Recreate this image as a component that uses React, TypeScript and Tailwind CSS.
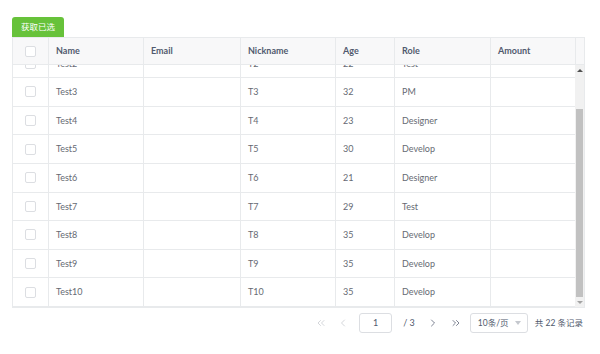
import { useLayoutEffect, useRef, useState } from "react";
import { ChevronLeft, ChevronRight, ChevronsLeft, ChevronsRight } from "lucide-react";

const rows = [
  { name: "Test1", nickname: "T1", age: 18, role: "Develop" },
  { name: "Test2", nickname: "T2", age: 22, role: "Test" },
  { name: "Test3", nickname: "T3", age: 32, role: "PM" },
  { name: "Test4", nickname: "T4", age: 23, role: "Designer" },
  { name: "Test5", nickname: "T5", age: 30, role: "Develop" },
  { name: "Test6", nickname: "T6", age: 21, role: "Designer" },
  { name: "Test7", nickname: "T7", age: 29, role: "Test" },
  { name: "Test8", nickname: "T8", age: 35, role: "Develop" },
  { name: "Test9", nickname: "T9", age: 35, role: "Develop" },
  { name: "Test10", nickname: "T10", age: 35, role: "Develop" },
];

function Checkbox() {
  return <span className="block h-[11px] w-[11px] rounded-[2px] border border-[#dcdee2] bg-white" />;
}

function HeadCell({ w, children }: { w: string; children?: React.ReactNode }) {
  return (
    <div className={`${w} flex h-full shrink-0 items-center border-r border-[#e8eaec] px-[7px] font-bold text-[#515a6e]`}>
      {children}
    </div>
  );
}

function Cell({ w, children }: { w: string; children?: React.ReactNode }) {
  return (
    <div className={`${w} flex h-full shrink-0 items-center border-r border-[#e8eaec] px-[7px] text-[#666a73]`}>
      {children}
    </div>
  );
}

export default function App() {
  const bodyRef = useRef<HTMLDivElement>(null);
  const [scroll, setScroll] = useState({ top: 0, total: 1, view: 1 });

  useLayoutEffect(() => {
    const el = bodyRef.current;
    if (!el) return;
    el.scrollTop = el.scrollHeight - el.clientHeight;
    setScroll({ top: el.scrollTop, total: el.scrollHeight, view: el.clientHeight });
  }, []);

  // track height minus the two arrow buttons
  const trackLen = scroll.view - 20;
  const thumbTop = 10 + (scroll.top / scroll.total) * trackLen;
  const thumbHeight = (scroll.view / scroll.total) * trackLen;

  return (
    <div
      className="min-h-screen bg-white px-[12px] pt-[17px] text-[9px]"
      style={{ fontFamily: 'Lato, "Noto Sans CJK SC", sans-serif' }}
    >
      <button
        type="button"
        className="flex h-[20px] w-[52px] items-center justify-center rounded-t-[3px] bg-[#67c23a] text-[8.5px] text-white"
      >
        获取已选
      </button>

      <div className="w-[573px] border-b border-l border-[#e8eaec]">
        {/* header */}
        <div className="flex h-[28px] border-b border-t border-[#e8eaec] bg-[#f8f8f9]">
          <HeadCell w="w-[36px] justify-center">
            <Checkbox />
          </HeadCell>
          <HeadCell w="w-[95px]">Name</HeadCell>
          <HeadCell w="w-[97px]">Email</HeadCell>
          <HeadCell w="w-[95px]">Nickname</HeadCell>
          <HeadCell w="w-[59px]">Age</HeadCell>
          <HeadCell w="w-[96px]">Role</HeadCell>
          <HeadCell w="w-[85px]">Amount</HeadCell>
          <div className="w-[10px] border-r border-[#e8eaec]" />
        </div>

        {/* body */}
        <div className="flex h-[242px]">
          <div ref={bodyRef} className="w-[563px] overflow-hidden">
            {rows.map((r) => (
              <div key={r.name} className="flex h-[28.6px] border-b border-[#e8eaec] bg-white">
                <Cell w="w-[36px] justify-center">
                  <Checkbox />
                </Cell>
                <Cell w="w-[95px]">{r.name}</Cell>
                <Cell w="w-[97px]" />
                <Cell w="w-[95px]">{r.nickname}</Cell>
                <Cell w="w-[59px]">{r.age}</Cell>
                <Cell w="w-[96px]">{r.role}</Cell>
                <Cell w="w-[85px]" />
              </div>
            ))}
          </div>
          <div className="relative w-[10px] border-r border-[#e8eaec] bg-[#f1f1f1]">
            <div className="flex h-[10px] items-center justify-center">
              <span className="h-0 w-0 border-x-[3px] border-b-[3px] border-x-transparent border-b-[#505050]" />
            </div>
            <div
              className="absolute left-[1px] right-[1px] bg-[#c1c1c1]"
              style={{ top: thumbTop, height: thumbHeight }}
            />
            <div className="absolute bottom-0 left-0 right-0 flex h-[10px] items-center justify-center">
              <span className="h-0 w-0 border-x-[3px] border-t-[3px] border-x-transparent border-t-[#a3a3a3]" />
            </div>
          </div>
        </div>
      </div>

      {/* pagination */}
      <div className="mt-[5px] flex h-[20px] w-[573px] items-center justify-end pr-[2px] text-[#515a6e]">
        <ChevronsLeft className="h-[12px] w-[12px] text-[#c5c8ce]" strokeWidth={1.5} />
        <ChevronLeft className="ml-[10px] h-[12px] w-[12px] text-[#c5c8ce]" strokeWidth={1.5} />
        <div className="ml-[10px] flex h-[20px] w-[33px] items-center justify-center rounded-[3px] border border-[#dcdee2] bg-white">
          1
        </div>
        <span className="ml-[11px]">/ 3</span>
        <ChevronRight className="ml-[12px] h-[12px] w-[12px]" strokeWidth={1.5} />
        <ChevronsRight className="ml-[11px] h-[12px] w-[12px]" strokeWidth={1.5} />
        <div className="ml-[8px] flex h-[20px] w-[58px] items-center justify-between rounded-[3px] border border-[#dcdee2] bg-white pl-[7px] pr-[6px]">
          <span className="text-[8.5px]">10条/页</span>
          <span className="h-0 w-0 border-x-[3px] border-t-[4px] border-x-transparent border-t-[#c5c8ce]" />
        </div>
        <span className="ml-[7px] text-[8.5px]">共 22 条记录</span>
      </div>
    </div>
  );
}
